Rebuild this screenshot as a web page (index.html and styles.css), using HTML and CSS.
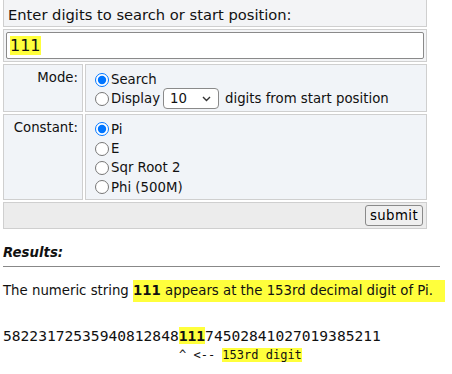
FILE: index.html
```html
<!DOCTYPE html>
<html lang="en">
<head>
    <meta charset="UTF-8">
    <title>Pi search</title>
    <link rel="stylesheet" href="styles.css">
</head>
<body>
    <form class="search-form">
        <table class="form-table">
            <tbody>
                <tr>
                    <td colspan="2" class="head-cell">Enter digits to search or start position:</td>
                </tr>
                <tr>
                    <td colspan="2" class="input-cell">
                        <div class="digits-box"><span class="mark">111</span></div>
                    </td>
                </tr>
                <tr>
                    <td class="label-cell">Mode:</td>
                    <td class="value-cell">
                        <label class="opt"><input type="radio" name="mode" checked>Search</label>
                        <label class="opt"><input type="radio" name="mode">Display
                            <span class="select-wrap">
                                <select class="count">
                                    <option>10</option>
                                </select>
                                <svg class="chevron" width="9" height="6" viewBox="0 0 9 6"><path d="M1 1 L4.5 4.5 L8 1" fill="none" stroke="#333" stroke-width="1.4"/></svg>
                            </span>
                            digits from start position</label>
                    </td>
                </tr>
                <tr>
                    <td class="label-cell">Constant:</td>
                    <td class="value-cell">
                        <label class="opt"><input type="radio" name="const" checked>Pi</label>
                        <label class="opt"><input type="radio" name="const">E</label>
                        <label class="opt"><input type="radio" name="const">Sqr Root 2</label>
                        <label class="opt"><input type="radio" name="const">Phi (500M)</label>
                    </td>
                </tr>
                <tr>
                    <td colspan="2" class="submit-cell">
                        <button type="button" class="submit-btn">submit</button>
                    </td>
                </tr>
            </tbody>
        </table>
    </form>

    <div class="results">
        <h3 class="results-title">Results:</h3>
        <hr class="rule">
        <p class="summary">The numeric string <span class="mark-line"><b>111</b> appears at the 153rd decimal digit of Pi.</span></p>
        <div class="digits">58223172535940812848<span class="mark"><b>111</b></span>74502841027019385211</div>
        <div class="pointer">^ &lt;-- <span class="mark">153rd digit</span></div>
    </div>
</body>
</html>
```

FILE: styles.css
```css
html,
body {
    margin: 0;
    background: #fff;
    color: #111;
    font-family: "DejaVu Sans", Verdana, sans-serif;
    font-size: 13.3px;
}

.search-form {
    margin: -6px 0 0 1px;
}

table.form-table {
    width: 428px;
    border-collapse: separate;
    border-spacing: 2px;
}

table.form-table td {
    border: 1px solid #cfcfcf;
    padding: 4px 4px;
}

.head-cell {
    background: #f3f4f6;
    font-size: 14.7px;
    line-height: 17px;
    padding: 9px 4px 3px !important;
}

.input-cell {
    background: #f3f4f6;
    padding: 2px 2px !important;
}

.digits-box {
    height: 25px;
    border: 1px solid #8a8a8a;
    border-radius: 2px;
    background: #fff;
    font-size: 16px;
    line-height: 25px;
    padding-left: 3px;
}

.label-cell {
    width: 70px;
    text-align: right;
    vertical-align: top;
    background: #f1f4f8;
    padding-top: 5px !important;
}

.value-cell {
    background: #f1f4f8;
    padding: 5px 4px 2px !important;
}

.opt {
    display: flex;
    align-items: center;
    height: 19.3px;
    white-space: nowrap;
}

.opt input {
    margin: 0 2px 0 5px;
    width: 14px;
    height: 14px;
}

.select-wrap {
    position: relative;
    display: inline-block;
    margin: 0 6px 0 3px;
}

.count {
    display: block;
    appearance: none;
    width: 56px;
    height: 21px;
    padding: 0 0 0 6px;
    border: 1px solid #8a8a8a;
    border-radius: 4px;
    background: #fff;
    color: #111;
    font-size: 13.3px;
    font-family: "DejaVu Sans", Verdana, sans-serif;
}

.chevron {
    position: absolute;
    right: 8px;
    top: 8px;
}

.submit-cell {
    background: #ececec;
    text-align: right;
    padding: 2px 3px 2px !important;
}

.submit-btn {
    font-family: "DejaVu Sans", Verdana, sans-serif;
    font-size: 13.3px;
    letter-spacing: 0.4px;
    height: 21px;
    padding: 0 4px;
    border: 1px solid #8a8a8a;
    border-radius: 3px;
    background: #efefef;
}

.results {
    padding: 0 3px;
}

.results-title {
    margin: 14px 0 0;
    font-size: 13.3px;
    font-style: italic;
    font-weight: bold;
}

.rule {
    margin: 6px 9px 0 0;
    border: 0;
    border-top: 1px solid #888;
}

.summary {
    margin: 16px 0 0;
}

.mark,
.mark-line {
    background: #ffff3c;
}

.mark-line {
    padding: 3px 12px 4px 0;
}

.digits {
    margin-top: 29px;
    font-family: "DejaVu Sans Mono", Consolas, monospace;
    font-size: 14.6px;
}

.pointer {
    margin-top: 4px;
    padding-left: 176px;
    font-family: "DejaVu Sans Mono", Consolas, monospace;
    font-size: 12px;
}
```
